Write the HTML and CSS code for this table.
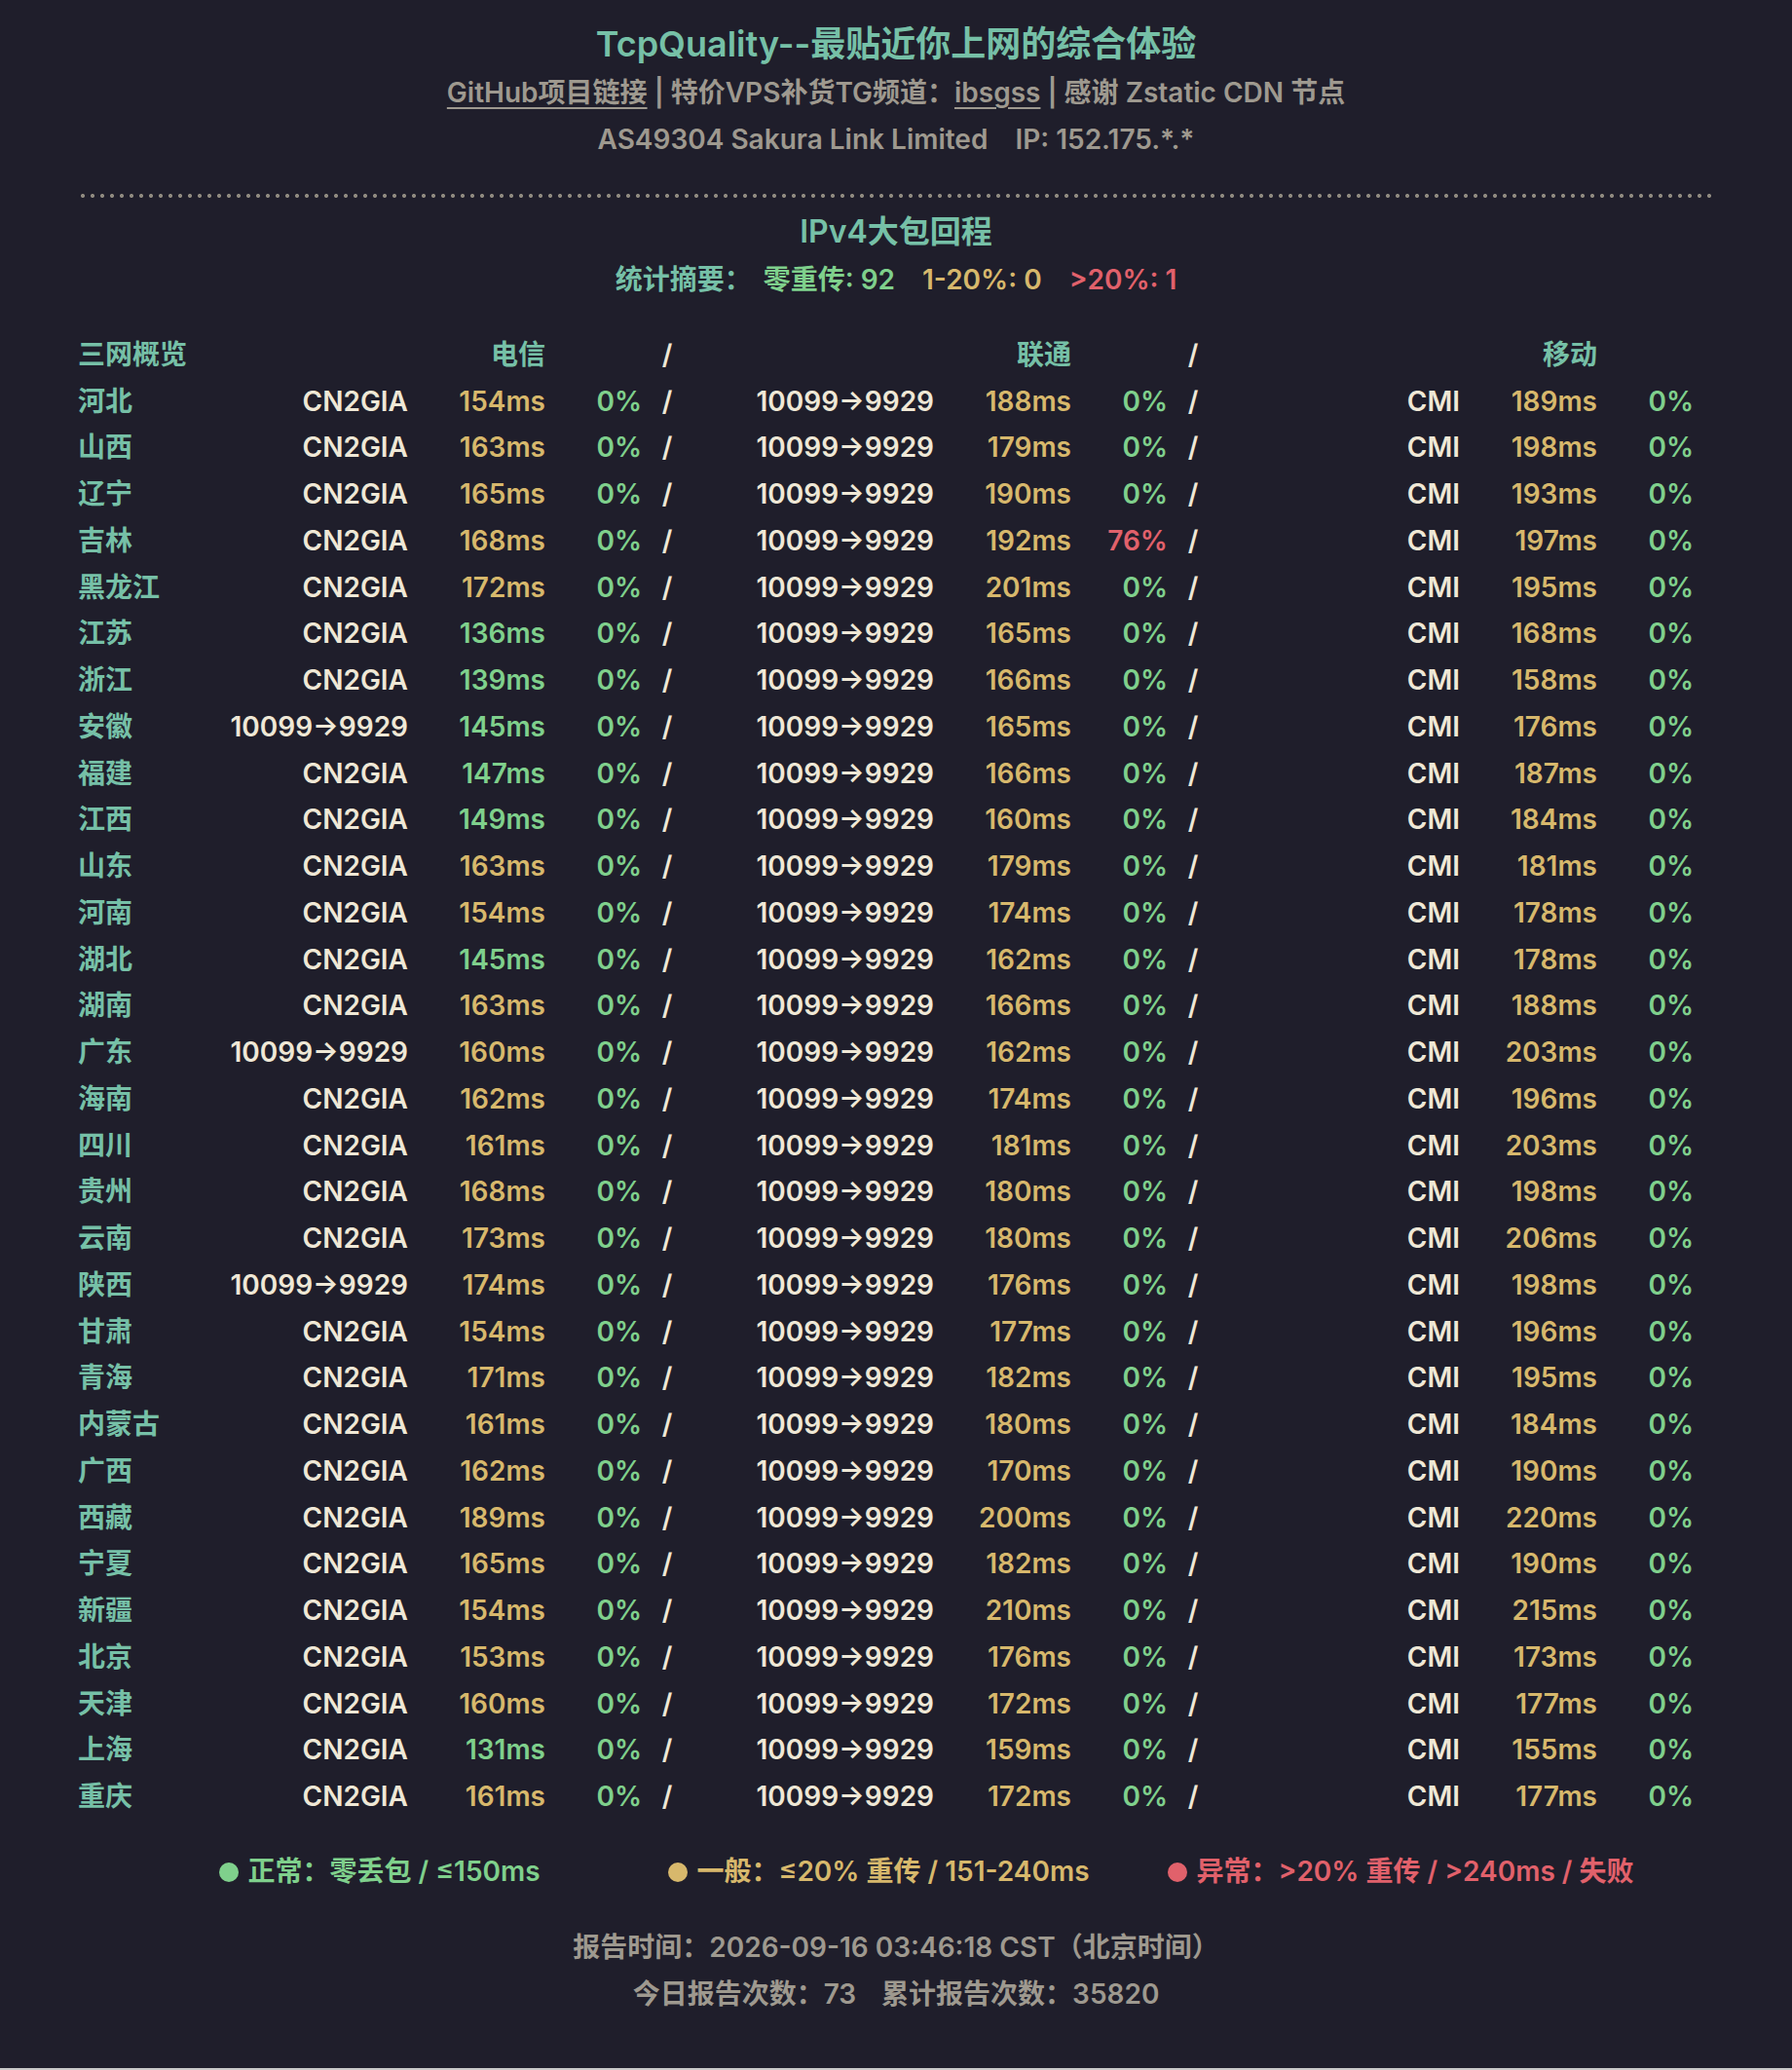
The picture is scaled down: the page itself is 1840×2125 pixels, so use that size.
FILE: index.html
```html
<!DOCTYPE html>
<html lang="zh-CN">
<head>
<meta charset="utf-8">
<title>TcpQuality</title>
<link rel="stylesheet" href="styles.css">
</head>
<body>
<div class="page">
  <header class="top">
    <h1 class="title">TcpQuality--最贴近你上网的综合体验</h1>
    <p class="sub"><a class="link" href="#">GitHub项目链接</a> | 特价VPS补货TG频道：<a class="link" href="#">ibsgss</a> | 感谢 Zstatic CDN 节点</p>
    <p class="sub">AS49304 Sakura Link Limited<span class="ip">IP: 152.175.*.*</span></p>
  </header>
  <div class="dots"></div>
  <h2 class="section">IPv4大包回程</h2>
  <p class="summary"><span class="teal lead">统计摘要：</span><span class="green">零重传: 92</span><span class="yellow">1-20%: 0</span><span class="red">&gt;20%: 1</span></p>

  <div class="grid">
    <div class="row head"><span class="p">三网概览</span><span></span><span class="l teal">电信</span><span></span><span class="s">/</span><span></span><span class="l teal">联通</span><span></span><span class="s">/</span><span></span><span class="l teal">移动</span><span></span></div>
    <div class="row"><span class="p">河北</span><span class="r">CN2GIA</span><span class="l yellow">154ms</span><span class="k green">0%</span><span class="s">/</span><span class="r">10099→9929</span><span class="l yellow">188ms</span><span class="k green">0%</span><span class="s">/</span><span class="r">CMI</span><span class="l yellow">189ms</span><span class="k green">0%</span></div>
    <div class="row"><span class="p">山西</span><span class="r">CN2GIA</span><span class="l yellow">163ms</span><span class="k green">0%</span><span class="s">/</span><span class="r">10099→9929</span><span class="l yellow">179ms</span><span class="k green">0%</span><span class="s">/</span><span class="r">CMI</span><span class="l yellow">198ms</span><span class="k green">0%</span></div>
    <div class="row"><span class="p">辽宁</span><span class="r">CN2GIA</span><span class="l yellow">165ms</span><span class="k green">0%</span><span class="s">/</span><span class="r">10099→9929</span><span class="l yellow">190ms</span><span class="k green">0%</span><span class="s">/</span><span class="r">CMI</span><span class="l yellow">193ms</span><span class="k green">0%</span></div>
    <div class="row"><span class="p">吉林</span><span class="r">CN2GIA</span><span class="l yellow">168ms</span><span class="k green">0%</span><span class="s">/</span><span class="r">10099→9929</span><span class="l yellow">192ms</span><span class="k red">76%</span><span class="s">/</span><span class="r">CMI</span><span class="l yellow">197ms</span><span class="k green">0%</span></div>
    <div class="row"><span class="p">黑龙江</span><span class="r">CN2GIA</span><span class="l yellow">172ms</span><span class="k green">0%</span><span class="s">/</span><span class="r">10099→9929</span><span class="l yellow">201ms</span><span class="k green">0%</span><span class="s">/</span><span class="r">CMI</span><span class="l yellow">195ms</span><span class="k green">0%</span></div>
    <div class="row"><span class="p">江苏</span><span class="r">CN2GIA</span><span class="l green">136ms</span><span class="k green">0%</span><span class="s">/</span><span class="r">10099→9929</span><span class="l yellow">165ms</span><span class="k green">0%</span><span class="s">/</span><span class="r">CMI</span><span class="l yellow">168ms</span><span class="k green">0%</span></div>
    <div class="row"><span class="p">浙江</span><span class="r">CN2GIA</span><span class="l green">139ms</span><span class="k green">0%</span><span class="s">/</span><span class="r">10099→9929</span><span class="l yellow">166ms</span><span class="k green">0%</span><span class="s">/</span><span class="r">CMI</span><span class="l yellow">158ms</span><span class="k green">0%</span></div>
    <div class="row"><span class="p">安徽</span><span class="r">10099→9929</span><span class="l green">145ms</span><span class="k green">0%</span><span class="s">/</span><span class="r">10099→9929</span><span class="l yellow">165ms</span><span class="k green">0%</span><span class="s">/</span><span class="r">CMI</span><span class="l yellow">176ms</span><span class="k green">0%</span></div>
    <div class="row"><span class="p">福建</span><span class="r">CN2GIA</span><span class="l green">147ms</span><span class="k green">0%</span><span class="s">/</span><span class="r">10099→9929</span><span class="l yellow">166ms</span><span class="k green">0%</span><span class="s">/</span><span class="r">CMI</span><span class="l yellow">187ms</span><span class="k green">0%</span></div>
    <div class="row"><span class="p">江西</span><span class="r">CN2GIA</span><span class="l green">149ms</span><span class="k green">0%</span><span class="s">/</span><span class="r">10099→9929</span><span class="l yellow">160ms</span><span class="k green">0%</span><span class="s">/</span><span class="r">CMI</span><span class="l yellow">184ms</span><span class="k green">0%</span></div>
    <div class="row"><span class="p">山东</span><span class="r">CN2GIA</span><span class="l yellow">163ms</span><span class="k green">0%</span><span class="s">/</span><span class="r">10099→9929</span><span class="l yellow">179ms</span><span class="k green">0%</span><span class="s">/</span><span class="r">CMI</span><span class="l yellow">181ms</span><span class="k green">0%</span></div>
    <div class="row"><span class="p">河南</span><span class="r">CN2GIA</span><span class="l yellow">154ms</span><span class="k green">0%</span><span class="s">/</span><span class="r">10099→9929</span><span class="l yellow">174ms</span><span class="k green">0%</span><span class="s">/</span><span class="r">CMI</span><span class="l yellow">178ms</span><span class="k green">0%</span></div>
    <div class="row"><span class="p">湖北</span><span class="r">CN2GIA</span><span class="l green">145ms</span><span class="k green">0%</span><span class="s">/</span><span class="r">10099→9929</span><span class="l yellow">162ms</span><span class="k green">0%</span><span class="s">/</span><span class="r">CMI</span><span class="l yellow">178ms</span><span class="k green">0%</span></div>
    <div class="row"><span class="p">湖南</span><span class="r">CN2GIA</span><span class="l yellow">163ms</span><span class="k green">0%</span><span class="s">/</span><span class="r">10099→9929</span><span class="l yellow">166ms</span><span class="k green">0%</span><span class="s">/</span><span class="r">CMI</span><span class="l yellow">188ms</span><span class="k green">0%</span></div>
    <div class="row"><span class="p">广东</span><span class="r">10099→9929</span><span class="l yellow">160ms</span><span class="k green">0%</span><span class="s">/</span><span class="r">10099→9929</span><span class="l yellow">162ms</span><span class="k green">0%</span><span class="s">/</span><span class="r">CMI</span><span class="l yellow">203ms</span><span class="k green">0%</span></div>
    <div class="row"><span class="p">海南</span><span class="r">CN2GIA</span><span class="l yellow">162ms</span><span class="k green">0%</span><span class="s">/</span><span class="r">10099→9929</span><span class="l yellow">174ms</span><span class="k green">0%</span><span class="s">/</span><span class="r">CMI</span><span class="l yellow">196ms</span><span class="k green">0%</span></div>
    <div class="row"><span class="p">四川</span><span class="r">CN2GIA</span><span class="l yellow">161ms</span><span class="k green">0%</span><span class="s">/</span><span class="r">10099→9929</span><span class="l yellow">181ms</span><span class="k green">0%</span><span class="s">/</span><span class="r">CMI</span><span class="l yellow">203ms</span><span class="k green">0%</span></div>
    <div class="row"><span class="p">贵州</span><span class="r">CN2GIA</span><span class="l yellow">168ms</span><span class="k green">0%</span><span class="s">/</span><span class="r">10099→9929</span><span class="l yellow">180ms</span><span class="k green">0%</span><span class="s">/</span><span class="r">CMI</span><span class="l yellow">198ms</span><span class="k green">0%</span></div>
    <div class="row"><span class="p">云南</span><span class="r">CN2GIA</span><span class="l yellow">173ms</span><span class="k green">0%</span><span class="s">/</span><span class="r">10099→9929</span><span class="l yellow">180ms</span><span class="k green">0%</span><span class="s">/</span><span class="r">CMI</span><span class="l yellow">206ms</span><span class="k green">0%</span></div>
    <div class="row"><span class="p">陕西</span><span class="r">10099→9929</span><span class="l yellow">174ms</span><span class="k green">0%</span><span class="s">/</span><span class="r">10099→9929</span><span class="l yellow">176ms</span><span class="k green">0%</span><span class="s">/</span><span class="r">CMI</span><span class="l yellow">198ms</span><span class="k green">0%</span></div>
    <div class="row"><span class="p">甘肃</span><span class="r">CN2GIA</span><span class="l yellow">154ms</span><span class="k green">0%</span><span class="s">/</span><span class="r">10099→9929</span><span class="l yellow">177ms</span><span class="k green">0%</span><span class="s">/</span><span class="r">CMI</span><span class="l yellow">196ms</span><span class="k green">0%</span></div>
    <div class="row"><span class="p">青海</span><span class="r">CN2GIA</span><span class="l yellow">171ms</span><span class="k green">0%</span><span class="s">/</span><span class="r">10099→9929</span><span class="l yellow">182ms</span><span class="k green">0%</span><span class="s">/</span><span class="r">CMI</span><span class="l yellow">195ms</span><span class="k green">0%</span></div>
    <div class="row"><span class="p">内蒙古</span><span class="r">CN2GIA</span><span class="l yellow">161ms</span><span class="k green">0%</span><span class="s">/</span><span class="r">10099→9929</span><span class="l yellow">180ms</span><span class="k green">0%</span><span class="s">/</span><span class="r">CMI</span><span class="l yellow">184ms</span><span class="k green">0%</span></div>
    <div class="row"><span class="p">广西</span><span class="r">CN2GIA</span><span class="l yellow">162ms</span><span class="k green">0%</span><span class="s">/</span><span class="r">10099→9929</span><span class="l yellow">170ms</span><span class="k green">0%</span><span class="s">/</span><span class="r">CMI</span><span class="l yellow">190ms</span><span class="k green">0%</span></div>
    <div class="row"><span class="p">西藏</span><span class="r">CN2GIA</span><span class="l yellow">189ms</span><span class="k green">0%</span><span class="s">/</span><span class="r">10099→9929</span><span class="l yellow">200ms</span><span class="k green">0%</span><span class="s">/</span><span class="r">CMI</span><span class="l yellow">220ms</span><span class="k green">0%</span></div>
    <div class="row"><span class="p">宁夏</span><span class="r">CN2GIA</span><span class="l yellow">165ms</span><span class="k green">0%</span><span class="s">/</span><span class="r">10099→9929</span><span class="l yellow">182ms</span><span class="k green">0%</span><span class="s">/</span><span class="r">CMI</span><span class="l yellow">190ms</span><span class="k green">0%</span></div>
    <div class="row"><span class="p">新疆</span><span class="r">CN2GIA</span><span class="l yellow">154ms</span><span class="k green">0%</span><span class="s">/</span><span class="r">10099→9929</span><span class="l yellow">210ms</span><span class="k green">0%</span><span class="s">/</span><span class="r">CMI</span><span class="l yellow">215ms</span><span class="k green">0%</span></div>
    <div class="row"><span class="p">北京</span><span class="r">CN2GIA</span><span class="l yellow">153ms</span><span class="k green">0%</span><span class="s">/</span><span class="r">10099→9929</span><span class="l yellow">176ms</span><span class="k green">0%</span><span class="s">/</span><span class="r">CMI</span><span class="l yellow">173ms</span><span class="k green">0%</span></div>
    <div class="row"><span class="p">天津</span><span class="r">CN2GIA</span><span class="l yellow">160ms</span><span class="k green">0%</span><span class="s">/</span><span class="r">10099→9929</span><span class="l yellow">172ms</span><span class="k green">0%</span><span class="s">/</span><span class="r">CMI</span><span class="l yellow">177ms</span><span class="k green">0%</span></div>
    <div class="row"><span class="p">上海</span><span class="r">CN2GIA</span><span class="l green">131ms</span><span class="k green">0%</span><span class="s">/</span><span class="r">10099→9929</span><span class="l yellow">159ms</span><span class="k green">0%</span><span class="s">/</span><span class="r">CMI</span><span class="l yellow">155ms</span><span class="k green">0%</span></div>
    <div class="row"><span class="p">重庆</span><span class="r">CN2GIA</span><span class="l yellow">161ms</span><span class="k green">0%</span><span class="s">/</span><span class="r">10099→9929</span><span class="l yellow">172ms</span><span class="k green">0%</span><span class="s">/</span><span class="r">CMI</span><span class="l yellow">177ms</span><span class="k green">0%</span></div>
  </div>

  <div class="legend">
    <span class="item green first"><i class="dot bg-green"></i>正常：零丢包 / ≤150ms</span>
    <span class="item yellow second"><i class="dot bg-yellow"></i>一般：≤20% 重传 / 151-240ms</span>
    <span class="item red"><i class="dot bg-red"></i>异常：&gt;20% 重传 / &gt;240ms / 失败</span>
  </div>

  <footer class="foot">
    <p class="sub">报告时间：2026-09-16 03:46:18 CST（北京时间）</p>
    <p class="sub">今日报告次数：73<span class="gap">累计报告次数：35820</span></p>
  </footer>
</div>
</body>
</html>
```

FILE: styles.css
```css
html {
  background: #c9c9c9;
}
body {
  margin: 0;
  background: #1f1e2b;
  font-family: Inter, "Noto Sans CJK SC", sans-serif;
  font-weight: 600;
  font-size: 28px;
  line-height: 1.7;
  color: #efe8d6;
}
.page {
  width: 1680px;
  margin: 0 auto;
  padding-top: 18px;
  min-height: 2123px;
  box-sizing: border-box;
}
.top, .foot {
  text-align: center;
}
.title {
  margin: 0;
  font-size: 36px;
  line-height: 54px;
  font-weight: 600;
  color: #76c0a7;
}
.sub {
  margin: 0;
  color: #9e998f;
}
.link {
  color: inherit;
  text-decoration: underline;
  text-underline-offset: 5px;
  text-decoration-thickness: 2px;
}
.ip {
  margin-left: 28px;
}
.gap {
  margin-left: 26px;
}
.dots {
  margin-top: 32px;
  height: 4px;
  background-image: radial-gradient(circle, #8e897f 1.8px, transparent 2.3px);
  background-size: 10px 4px;
}
.section {
  margin: 11px 0 0;
  font-size: 32px;
  line-height: 48px;
  font-weight: 600;
  text-align: center;
  color: #76c0a7;
}
.summary {
  margin: 2px 0 0;
  display: flex;
  justify-content: center;
  gap: 28px;
}
.summary .lead {
  margin-right: -16px;
}
.teal { color: #76c0a7; }
.green { color: #7fd08c; }
.yellow { color: #d7b86c; }
.red { color: #e1616b; }

.grid {
  margin-top: 29px;
}
.row {
  display: grid;
  grid-template-columns: 91px 248px 141px 99px 52px 248px 141px 99px 52px 248px 141px 99px;
  line-height: 47.75px;
  white-space: nowrap;
}
.row > span {
  text-align: right;
}
.row > .p {
  text-align: left;
  color: #76c0a7;
}
.row > .s {
  text-align: center;
}

.legend {
  margin-top: 29px;
  display: flex;
  justify-content: center;
  padding-left: 62px;
}
.item {
  display: flex;
  align-items: center;
}
.first { margin-right: 131px; }
.second { margin-right: 80px; }
.dot {
  width: 20px;
  height: 20px;
  border-radius: 50%;
  margin-right: 10px;
}
.bg-green { background: #7fd08c; }
.bg-yellow { background: #d7b86c; }
.bg-red { background: #e1616b; }

.foot {
  margin-top: 31px;
}
```
